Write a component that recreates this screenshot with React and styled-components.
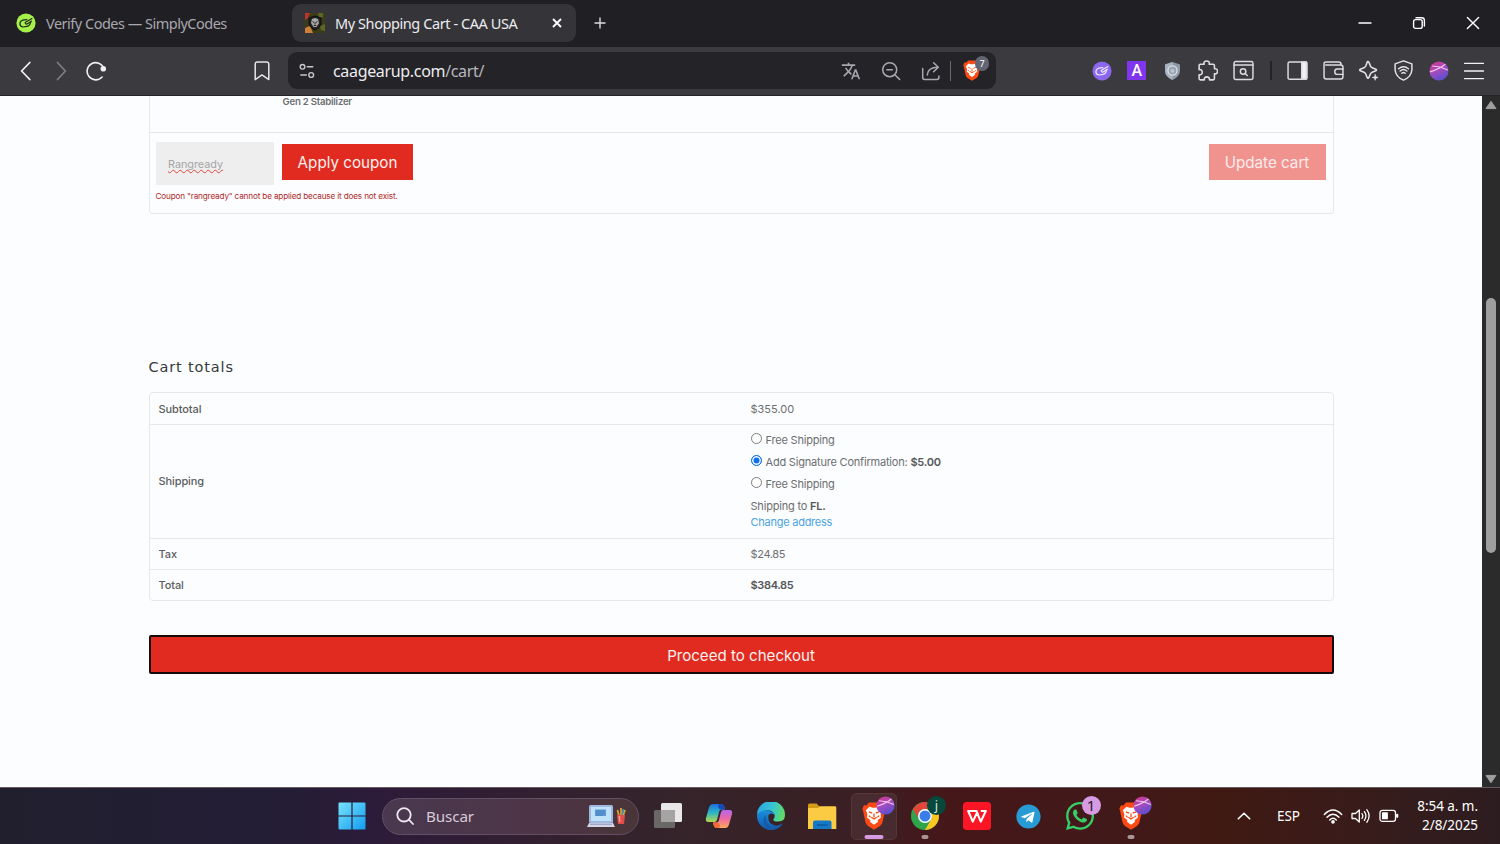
import styled, { createGlobalStyle } from 'styled-components'
import { MdTranslate } from 'react-icons/md'
import { FaWhatsapp, FaTelegram } from 'react-icons/fa'

export default function App() {
    return (
        <Screen>
            <GlobalStyle />
            <Tabs />
            <Toolbar />
            <Viewport>
                <CartPage />
                <Scrollbar>
                    <Arrow viewBox="0 0 12 10"><path d="M6 1.2 L11 8.6 H1 Z" /></Arrow>
                    <Thumb />
                    <Arrow viewBox="0 0 12 10"><path d="M6 8.8 L11 1.4 H1 Z" /></Arrow>
                </Scrollbar>
            </Viewport>
            <Taskbar />
        </Screen>
    )
}

function Tabs() {
    return (
        <TabBar>
            <Tab $width="275px" $pad="16px">
                <svg width="20" height="20" viewBox="0 0 20 20">
                    <circle cx="10" cy="10" r="9.6" fill="#a6f04c" />
                    <Pointer color="#1e2a12" />
                </svg>
                <TabTitle $color="#a9a8ad" $space="-0.5px">Verify Codes — SimplyCodes</TabTitle>
            </Tab>
            <Tab $active $width="284px" $pad="13px">
                <svg width="20" height="20" viewBox="0 0 20 20">
                    <rect width="20" height="20" fill="#3c3d18" />
                    <path d="M0 0H5L3 5L0 7Z" fill="#b8342a" />
                    <path d="M0 15L5 13L8 20H0Z" fill="#cf8038" />
                    <path d="M13 0H18V4L14 5Z M15 13L20 11V18L16 17Z" fill="#5d6724" />
                    <path d="M10 3L16 5V10C16 13 13 15.5 10 17C7 15.5 4 13 4 10V5Z" fill="#222326" stroke="#0d0d0d" />
                    <path d="M7 6L10 5L13 6L14 10L11.5 14H8.5L6 10Z" fill="#a9a7a6" />
                    <path d="M7.5 8.5L9 9.5M12.5 8.5L11 9.5M10 9V11.5M8.8 12.5H11.3" stroke="#29292b" strokeWidth="1" />
                </svg>
                <TabTitle $color="#ececee" $space="-0.42px">My Shopping Cart - CAA USA</TabTitle>
                <TabClose viewBox="0 0 12 12"><path d="M2 2L10 10M10 2L2 10" /></TabClose>
            </Tab>
            <NewTab viewBox="0 0 14 14"><path d="M7 1.5V12.5M1.5 7H12.5" /></NewTab>
            <WindowButtons>
                <Line viewBox="0 0 14 14" $size="14px" $color="#fff"><path d="M1 7H13" /></Line>
                <Line viewBox="0 0 14 14" $size="14px" $color="#fff">
                    <rect x="1.6" y="3.6" width="8.6" height="8.8" rx="2" />
                    <path d="M4 1.7H9.7Q12.4 1.7 12.4 4.4V10" />
                </Line>
                <Line viewBox="0 0 14 14" $size="14px" $color="#fff"><path d="M1.4 1.4L12.6 12.6M12.6 1.4L1.4 12.6" /></Line>
            </WindowButtons>
        </TabBar>
    )
}

// pointing hand used by the SimplyCodes logo
function Pointer({ color }) {
    return (
        <g fill="none" stroke={color} strokeWidth="1.2" strokeLinecap="round" strokeLinejoin="round">
            <path d="M10.8 6.6L6.5 7.2Q3.8 8.2 3.9 11.2Q4.3 13.9 7.5 14L12 13.2Q14.2 12 14.8 9" />
            <path d="M15.9 5.6L9.2 9.6Q9.2 11.4 11.2 11L15.4 8.2" />
        </g>
    )
}

function Toolbar() {
    return (
        <ToolRow>
            <Slot $width="35px">
                <Line viewBox="0 0 20 20" $size="20px" $color="#f0f0f2" $stroke={1.8}><path d="M13.8 1.5L5.6 10L13.8 18.5" /></Line>
            </Slot>
            <Slot $width="35px">
                <Line viewBox="0 0 20 20" $size="20px" $color="#7d7c82" $stroke={1.8}><path d="M6.5 1.5L14.4 10L6.5 18.5" /></Line>
            </Slot>
            <Slot $width="35px">
                <Line viewBox="0 0 20 20" $size="20px" $color="#f0f0f2" $stroke={1.6}>
                    <path d="M16.1 16A8.6 8.6 0 1 1 17.8 7.3" />
                    <circle cx="17.3" cy="7.7" r="2" fill="#f0f0f2" />
                </Line>
            </Slot>
            <Bookmark viewBox="0 0 16 20"><path d="M1.2 3.2Q1.2 1 3.4 1H12.6Q14.8 1 14.8 3.2V18.6L8 13.9L1.2 18.6Z" /></Bookmark>
            <UrlBar>
                <Line viewBox="0 0 16 16" $size="16px" $color="#c7c6cb" $stroke={1.4}>
                    <circle cx="3.5" cy="3.8" r="2.3" />
                    <path d="M8.2 3.8H13.8M1.8 12H7.4" />
                    <circle cx="12.2" cy="12" r="2.4" />
                </Line>
                <Address>caagearup.com<span>/cart/</span></Address>
                <UrlIcons>
                    <Slot $width="40px"><MdTranslate size={20} color="#a9a8ae" /></Slot>
                    <Slot $width="40px">
                        <Line viewBox="0 0 20 20" $size="20px" $color="#a9a8ae" $stroke={1.5}>
                            <circle cx="8.7" cy="8.7" r="7" /><path d="M13.8 13.8L18.6 18.4M5.8 8.7H11.4" />
                        </Line>
                    </Slot>
                    <Slot $width="39px">
                        <Line viewBox="0 0 20 20" $size="20px" $color="#a9a8ae" $stroke={1.5}>
                            <path d="M1.7 7.5V16.5Q1.7 18.4 3.6 18.4H16Q17.9 18.4 17.9 16.5V15" />
                            <path d="M6.3 14Q6.6 6.5 17 6.3M12.6 1.8L17.3 6.3L12.6 10.7" />
                        </Line>
                    </Slot>
                    <UrlDivider />
                    <ShieldButton>
                        <BraveLogo height={21} />
                        <Count>7</Count>
                    </ShieldButton>
                </UrlIcons>
            </UrlBar>
            <Extensions>
                <Slot $width="35.4px">
                    <svg width="20" height="20" viewBox="0 0 20 20">
                        <circle cx="10" cy="10" r="9.6" fill="#8b67ee" /><Pointer color="#eee8ff" />
                    </svg>
                </Slot>
                <Slot $width="35.4px"><LetterTile>A</LetterTile></Slot>
                <Slot $width="35.4px">
                    <svg width="17" height="20" viewBox="0 0 17 20">
                        <path d="M8.5 1L16 3.5V10Q15.5 16 8.5 19Q1.5 16 1 10V3.5Z" fill="#8f98a6" />
                        <path d="M8.5 1V19Q1.5 16 1 10V3.5Z" fill="#a8b1bf" />
                        <circle cx="8.5" cy="9.5" r="4.6" fill="#98a2b2" stroke="#dde2ea" strokeWidth="1.3" />
                        <path d="M6.7 8.3H10.3V11L8.5 12L6.7 11Z" fill="#bdc5d0" />
                    </svg>
                </Slot>
                <Slot $width="35.4px">
                    <Line viewBox="0 0 20 20" $size="21px" $color="#dddce1" $stroke={1.5}>
                        <path d="M3.2 4H6.8C6.2 1.9 7.4 .9 9.2 .9S12.2 1.9 11.6 4H15.4Q16.6 4 16.6 5.2V8.4C18.6 7.9 19.5 9.2 19.5 10.8S18.6 13.6 16.6 13.1V17.6Q16.6 18.9 15.4 18.9H11.8C12.2 17 11 16.1 9.4 16.1S6.6 17 7 18.9H3.2Q2 18.9 2 17.6V14.1C4 14.5 5 13.2 5 11.6S4 8.8 2 9.2V5.2Q2 4 3.2 4Z" />
                    </Line>
                </Slot>
                <Slot $width="35.4px">
                    <Line viewBox="0 0 20 20" $size="21px" $color="#dddce1" $stroke={1.4}>
                        <rect x="1" y="1.5" width="18" height="17" rx="1.6" /><path d="M1 4.8H19" />
                        <circle cx="9.6" cy="10.9" r="2.6" /><path d="M11.6 12.9L13.6 14.8" />
                    </Line>
                </Slot>
                <Slot $width="19.6px"><ExtDivider /></Slot>
                <Slot $width="35.2px">
                    <Line viewBox="0 0 20 20" $size="21px" $color="#dddce1" $stroke={1.4}>
                        <rect x="1" y="1.8" width="18" height="16.6" rx="1.6" /><path d="M14 2H18.6V18H14Z" fill="#f2f2f5" />
                    </Line>
                </Slot>
                <Slot $width="35.2px">
                    <Line viewBox="0 0 20 20" $size="21px" $color="#dddce1" $stroke={1.4}>
                        <path d="M17.2 5V4Q17.2 1.8 15 1.8H3Q1 1.8 1 3.6V16Q1 18 3 18H17Q19 18 19 16V7Q19 4.8 17 4.8H2.6" />
                        <path d="M19 8.6H13.5Q11.2 8.6 11.2 11.1Q11.2 13.7 13.5 13.7H19" />
                    </Line>
                </Slot>
                <Slot $width="35.2px">
                    <Line viewBox="0 0 20 20" $size="21px" $color="#e4e3e8" $stroke={1.5}>
                        <path d="M8.9 1.6Q9.7 1 10.4 2.2L11.8 5.7Q12.3 6.9 13.5 7.4L17 8.8Q18.2 9.5 17 10.3L13.5 11.6Q12.3 12.1 11.8 13.3L10.4 16.7Q9.5 18 8.7 16.7L7.4 13.3Q6.9 12.1 5.7 11.6L2.2 10.3Q1 9.5 2.2 8.8L5.7 7.4Q6.9 6.9 7.4 5.7Z" />
                        <path d="M16.4 13.8L17.1 15.9L19.2 16.6L17.1 17.3L16.4 19.4L15.7 17.3L13.6 16.6L15.7 15.9Z" fill="#e4e3e8" strokeWidth=".6" />
                    </Line>
                </Slot>
                <Slot $width="35.2px">
                    <Line viewBox="0 0 20 20" $size="21px" $color="#e4e3e8" $stroke={1.4}>
                        <path d="M10 .8L18 3.7V9.3Q17.5 16.1 10 19.2Q2.5 16.1 2 9.3V3.7Z" />
                        <path d="M5.3 8.3Q10 4.4 14.7 8.3M6.8 10.5Q10 7.8 13.2 10.5M8.4 12.6Q10 11.4 11.6 12.6" />
                    </Line>
                </Slot>
                <Slot $width="35.2px"><Profile size={20} /></Slot>
                <Slot $width="35.2px">
                    <Line viewBox="0 0 20 20" $size="20px" $color="#f2f2f5" $stroke={1.3}><path d="M.5 2.4H19.5M.5 10H19.5M.5 17.6H19.5" /></Line>
                </Slot>
            </Extensions>
        </ToolRow>
    )
}

function BraveLogo({ height }) {
    return (
        <svg width={height * 24 / 28} height={height} viewBox="0 0 24 28">
            <path d="M7 .6H17L19.5 3.4L22 3.2L23.6 6.5L22.9 9L20.5 20.3Q20 22.5 18 24L12 27.8L6 24Q4 22.5 3.5 20.3L1.1 9L.4 6.5L2 3.2L4.5 3.4Z" fill="#fb4a14" />
            <path d="M3.8 8.3L7.5 4.8L10.5 5.8H13.5L16.5 4.8L20.2 8.3L18.6 12L19 15.5L15.8 18V20L12 22.7L8.2 20V18L5 15.5L5.4 12Z" fill="#fff" />
            <path d="M7 9.8L10.2 11.2M17 9.8L13.8 11.2M12 11.5V15.2M9.3 15.2L12 17L14.7 15.2M6.8 13.6L8.6 15.4M17.2 13.6L15.4 15.4" fill="none" stroke="#fb4a14" strokeWidth="1.3" />
        </svg>
    )
}

function Profile({ size }) {
    return (
        <svg width={size} height={size} viewBox="0 0 20 20">
            <defs>
                <linearGradient id="profile" x1=".2" y1="0" x2=".7" y2="1">
                    <stop offset="0" stopColor="#d0388f" /><stop offset=".5" stopColor="#a04bc0" /><stop offset="1" stopColor="#554fd0" />
                </linearGradient>
            </defs>
            <circle cx="10" cy="10" r="9.6" fill="url(#profile)" />
            <path d="M3.2 5Q11 5.2 18.8 9M1 10.8Q10 8.2 16.2 3.2" fill="none" stroke="#f0c4ec" strokeWidth="1.2" />
        </svg>
    )
}

function CartPage() {
    return (
        <Page>
            <CartBox>
                <Product>Gen 2 Stabilizer</Product>
                <Actions>
                    <Coupon><span>Rangready</span></Coupon>
                    <Button $width="131px">Apply coupon</Button>
                    <Button $width="117px" $disabled>Update cart</Button>
                </Actions>
                <CouponError>Coupon "rangready" cannot be applied because it does not exist.</CouponError>
            </CartBox>
            <Title>Cart totals</Title>
            <Totals>
                <Row $height="31px">
                    <Th>Subtotal</Th>
                    <Td>$355.00</Td>
                </Row>
                <Row $height="113.5px">
                    <Th>Shipping</Th>
                    <Td $raised>
                        <Option><Radio />Free Shipping</Option>
                        <Option><Radio $checked />Add Signature Confirmation:&nbsp;<b>$5.00</b></Option>
                        <Option><Radio />Free Shipping</Option>
                        <Destination>Shipping to <b>FL.</b></Destination>
                        <ChangeLink>Change address</ChangeLink>
                    </Td>
                </Row>
                <Row $height="31px">
                    <Th>Tax</Th>
                    <Td $tight>$24.85</Td>
                </Row>
                <Row $height="31px">
                    <Th>Total</Th>
                    <Td $tight><b>$384.85</b></Td>
                </Row>
            </Totals>
            <Checkout>Proceed to checkout</Checkout>
        </Page>
    )
}

function Taskbar() {
    return (
        <Bar>
            <svg width="28" height="28" viewBox="0 0 28 28">
                <defs>
                    <linearGradient id="win" x1="0" y1="0" x2="1" y2="1">
                        <stop offset="0" stopColor="#78e3fb" /><stop offset="1" stopColor="#119cf0" />
                    </linearGradient>
                </defs>
                <path d="M1.5 .5H13.4V13.4H.5V1.5Q.5 .5 1.5 .5ZM14.6 .5H26.5Q27.5 .5 27.5 1.5V13.4H14.6ZM.5 14.6H13.4V27.5H1.5Q.5 27.5 .5 26.5ZM14.6 14.6H27.5V26.5Q27.5 27.5 26.5 27.5H14.6Z" fill="url(#win)" />
            </svg>
            <Search>
                <Line viewBox="0 0 18 18" $size="18px" $color="#eee6f0" $stroke={1.8}><circle cx="8" cy="7.8" r="6.7" /><path d="M12.9 12.7L17 17" /></Line>
                <span>Buscar</span>
                <svg width="40" height="24" viewBox="0 0 40 24">
                    <rect x="3" y="1" width="24" height="18" rx="1.5" fill="#9fb8e0" />
                    <rect x="5" y="3" width="20" height="14" fill="#bfe2fa" />
                    <path d="M9 5.5H20V12H9Z" fill="#5e9bd6" />
                    <path d="M10 7H19M10 9H19M10 11H17" stroke="#3675ba" strokeWidth=".7" />
                    <path d="M3 19H27L29 23H1Z" fill="#d3d6e6" />
                    <path d="M4 20.2H26" stroke="#8e93b4" />
                    <path d="M33 12L31.5 6M35 12V4M37 12L39 6" stroke="#dda22e" strokeWidth="1.8" />
                    <path d="M36 11L37.5 5" stroke="#4693c9" strokeWidth="1.5" />
                    <path d="M31 11H39L38 20H32Z" fill="#e34d4b" /><path d="M32.5 12H34.2L34.4 18H33Z" fill="#ff9a90" />
                </svg>
            </Search>
            <Apps>
                <AppSlot>
                    <svg width="30" height="28" viewBox="0 0 30 28">
                        <rect x="8" y="1" width="21" height="19" rx="1.5" fill="#e9e8e8" />
                        <rect x="1" y="8" width="21" height="18" rx="1.5" fill="#6a6767" />
                        <path d="M8 8H22V20H8Z" fill="#a5a3a3" />
                    </svg>
                </AppSlot>
                <AppSlot><Copilot /></AppSlot>
                <AppSlot><Edge /></AppSlot>
                <AppSlot>
                    <svg width="30" height="28" viewBox="0 0 30 28">
                        <path d="M1 3Q1 1.5 2.5 1.5H9.5L12.5 4.5V10H1Z" fill="#d39a17" />
                        <path d="M1 6H11L13 4.2H28Q29.3 4.2 29.3 5.5V27H1Z" fill="#fccb44" />
                        <path d="M6 27V20.5Q6 18.5 8 18.5H22.5Q24.5 18.5 24.5 20.5V27Z" fill="#1679c8" />
                        <path d="M10 23H20.5" stroke="#09518f" strokeWidth="1.2" />
                    </svg>
                </AppSlot>
                <AppSlot $active>
                    <BraveLogo height={28} />
                    <ProfileBadge><Profile size={19} /></ProfileBadge>
                    <Running $active />
                </AppSlot>
                <AppSlot>
                    <svg width="28" height="28" viewBox="0 0 28 28">
                        <circle cx="14" cy="14" r="14" fill="#2ea44c" />
                        <path d="M1.9 7A14 14 0 0 1 26.1 7H14A7 7 0 0 0 7.9 17.5Z" fill="#e2453a" />
                        <path d="M26.1 7A14 14 0 0 1 14 28L20.1 17.5A7 7 0 0 0 14 7Z" fill="#fbc71f" />
                        <circle cx="14" cy="14" r="7" fill="#fff" /><circle cx="14" cy="14" r="5.5" fill="#3b7de8" />
                    </svg>
                    <Badge $bg="#07473c" $color="#d5e5df" $font="13px">j</Badge>
                    <Running />
                </AppSlot>
                <AppSlot>
                    <svg width="28" height="28" viewBox="0 0 28 28">
                        <rect width="28" height="28" rx="3.5" fill="#fb1525" />
                        <path d="M10.5 9H5.2L9.8 19.6L14 10.6L17.8 19.6L22.8 9H17.8" fill="none" stroke="#fff" strokeWidth="2.1" strokeLinejoin="round" />
                        <path d="M9 9H13.6L15 12.5" fill="none" stroke="#fff" strokeWidth="1.8" />
                    </svg>
                </AppSlot>
                <AppSlot>
                    <TelegramMark><FaTelegram size={25} /></TelegramMark>
                </AppSlot>
                <AppSlot>
                    <FaWhatsapp size={32} color="#35cf67" />
                    <Badge $bg="#d79be3" $color="#251a28" $font="15px">1</Badge>
                </AppSlot>
                <AppSlot>
                    <BraveLogo height={28} />
                    <ProfileBadge><Profile size={19} /></ProfileBadge>
                    <Running />
                </AppSlot>
            </Apps>
            <Tray>
                <Line viewBox="0 0 14 10" $size="14px" $color="#fff" $stroke={1.6}><path d="M1.3 7.8L7 2.2L12.7 7.8" /></Line>
                <Lang>ESP</Lang>
                <TrayIcons>
                    <Line viewBox="0 0 20 16" $size="20px" $color="#fff" $stroke={1.4}>
                        <path d="M1.3 6.5Q10 -2.4 18.7 6.5M4 9.3Q10 3.2 16 9.3M6.7 12Q10 8.6 13.3 12" />
                        <circle cx="10" cy="13.9" r="1.1" fill="#fff" />
                    </Line>
                    <Line viewBox="0 0 20 16" $size="20px" $color="#fff" $stroke={1.3}>
                        <path d="M1 5.5H4.5L8.3 2V14L4.5 10.5H1Z M11 5.6Q12.6 8 11 10.4M13.4 3.6Q16.4 8 13.4 12.4M15.8 1.7Q20.4 8 15.8 14.3" />
                    </Line>
                    <Line viewBox="0 0 20 16" $size="20px" $color="#fff" $stroke={1.3}>
                        <rect x="1" y="2.3" width="15.5" height="11" rx="2.4" />
                        <rect x="3.6" y="5" width="4.6" height="5.7" fill="#fff" />
                        <path d="M18.2 6.8V8.8" strokeWidth="2.2" />
                    </Line>
                </TrayIcons>
                <Clock>
                    <span>8:54 a. m.</span>
                    <span>2/8/2025</span>
                </Clock>
            </Tray>
        </Bar>
    )
}

function Copilot() {
    return (
        <svg width="28" height="28" viewBox="0 0 28 28">
            <defs>
                <linearGradient id="cpLeft" x1="0" y1="0" x2="0" y2="1">
                    <stop offset="0" stopColor="#1c6fe0" /><stop offset=".5" stopColor="#2db7c4" /><stop offset="1" stopColor="#b8d84a" />
                </linearGradient>
                <linearGradient id="cpRight" x1="0" y1="0" x2="0" y2="1">
                    <stop offset="0" stopColor="#b565ea" /><stop offset=".5" stopColor="#ee6aa0" /><stop offset="1" stopColor="#fbab57" />
                </linearGradient>
            </defs>
            <path d="M8 2H16Q18.5 2 19.4 5L20 7.5H16.5Q14.8 7.5 14.2 9.5L12 18Q11.4 20 9.5 20H3.5Q0 20 1 16L4 5.5Q5 2 8 2Z" fill="url(#cpLeft)" />
            <path d="M14 2H16Q18.5 2 19.4 5L20 7.5H16.5Q13.7 7.5 13 4Z" fill="#1648b8" />
            <path d="M20 26H12Q9.5 26 8.6 23L8 20.5H11.5Q13.2 20.5 13.8 18.5L16 10Q16.6 8 18.5 8H24.5Q28 8 27 12L24 22.5Q23 26 20 26Z" fill="url(#cpRight)" />
            <path d="M14 26H12Q9.5 26 8.6 23L8 20.5H11.5Q14.3 20.5 15 24Z" fill="#f26a38" />
        </svg>
    )
}

function Edge() {
    return (
        <svg width="28" height="28" viewBox="0 0 28 28">
            <defs>
                <linearGradient id="edgeTop" x1="0" y1=".3" x2="1" y2=".5">
                    <stop offset="0" stopColor="#2aa7e4" /><stop offset=".55" stopColor="#37c6d1" /><stop offset="1" stopColor="#62dc62" />
                </linearGradient>
                <linearGradient id="edgeLow" x1="0" y1="0" x2="0" y2="1">
                    <stop offset="0" stopColor="#1a8fdd" /><stop offset="1" stopColor="#1158ac" />
                </linearGradient>
            </defs>
            <path d="M0 13A14 14 0 0 1 28 13Q28 19.4 21.5 19.6Q16.4 19.7 16.2 17.4Q17.8 16 17.7 13.6Q17.2 10 12.6 8.6Q4.5 7.5 0 13Z" fill="url(#edgeTop)" />
            <path d="M0 13Q4 7.6 11 8.6Q16.2 9.6 17.6 13Q13.5 9.9 11.6 13Q9.8 21.2 18 23.6Q22.5 24 25.8 21.5A14 14 0 0 1 0 13Z" fill="url(#edgeLow)" />
            <path d="M9 12.5Q7.6 20.5 13.8 24.1Q20 26 25.8 21.5Q21.5 28 14 28Q7 26.7 6.5 20Q6.4 15.3 9 12.5Z" fill="#155da8" />
        </svg>
    )
}

const GlobalStyle = createGlobalStyle`
    * { box-sizing: border-box; }
    body { margin: 0; overflow: hidden; }
    svg { flex-shrink: 0; display: block; }
`

const Screen = styled.div`
    width: 1500px;
    height: 844px;
    display: flex;
    flex-direction: column;
    overflow: hidden;
    font-family: "Noto Sans", "Open Sans", sans-serif;
`
const Line = styled.svg`
    width: ${props => props.$size};
    height: ${props => props.$size};
    fill: none;
    stroke: ${props => props.$color};
    stroke-width: ${props => props.$stroke || 1.4};
    stroke-linecap: round;
    stroke-linejoin: round;
`
const TabBar = styled.div`
    height: 47px;
    padding-bottom: 1px;
    background: #201f24;
    display: flex;
    align-items: center;
    flex-shrink: 0;
`
const Tab = styled.div`
    width: ${props => props.$width};
    height: 38px;
    padding: 0 13px 0 ${props => props.$pad};
    margin-right: 17px;
    border-radius: 9px;
    background: ${props => props.$active ? '#353439' : 'transparent'};
    display: flex;
    align-items: center;
    gap: 10px;
`
const TabTitle = styled.div`
    font-size: 14.5px;
    white-space: nowrap;
    color: ${props => props.$color};
    letter-spacing: ${props => props.$space};
`
const TabClose = styled.svg`
    width: 12px;
    height: 12px;
    margin-left: auto;
    stroke: #fff;
    stroke-width: 1.8;
`
const NewTab = styled.svg`
    width: 14px;
    height: 14px;
    stroke: #dcdce0;
    stroke-width: 1.4;
`
const WindowButtons = styled.div`
    margin-left: auto;
    margin-right: 20px;
    display: flex;
    gap: 40px;
`
const ToolRow = styled.div`
    height: 49px;
    padding: 0 0 1px 8px;
    background: #3b3a3f;
    border-bottom: 1px solid #252429;
    display: flex;
    align-items: center;
    flex-shrink: 0;
`
const Slot = styled.div`
    width: ${props => props.$width};
    display: flex;
    justify-content: center;
    align-items: center;
    flex-shrink: 0;
`
const Bookmark = styled.svg`
    width: 16px;
    height: 20px;
    margin: 0 18px 0 141px;
    fill: none;
    stroke: #e6e5ea;
    stroke-width: 1.5;
    stroke-linejoin: round;
`
const UrlBar = styled.div`
    width: 708px;
    height: 37px;
    padding-left: 11px;
    border-radius: 9px;
    background: #242328;
    display: flex;
    align-items: center;
`
const Address = styled.div`
    margin-left: 18px;
    font-size: 16px;
    letter-spacing: -0.33px;
    color: #ededf0;
    white-space: nowrap;
    span { color: #b7b6bc; }
`
const UrlIcons = styled.div`
    margin-left: auto;
    display: flex;
    align-items: center;
    padding-right: 5px;
`
const UrlDivider = styled.div`
    width: 1px;
    height: 20px;
    background: #68676d;
`
const ShieldButton = styled.div`
    width: 40px;
    height: 30px;
    padding-left: 12px;
    position: relative;
    display: flex;
    align-items: center;
`
const Count = styled.div`
    position: absolute;
    right: 2px;
    top: 0;
    width: 14px;
    height: 15px;
    border-radius: 7px;
    background: #636574;
    color: #fff;
    font-size: 9px;
    line-height: 15px;
    text-align: center;
`
const Extensions = styled.div`
    display: flex;
    align-items: center;
    margin-left: auto;
    margin-right: 8.5px;
`
const LetterTile = styled.div`
    width: 19px;
    height: 19px;
    background: #8035ee;
    color: #fff;
    font: 500 16px/19px "Roboto", sans-serif;
    text-align: center;
`
const ExtDivider = styled.div`
    width: 2px;
    height: 19px;
    background: #242328;
`
const Viewport = styled.div`
    flex: 1;
    min-height: 0;
    display: flex;
    background: #fcfdff;
`
const Page = styled.div`
    flex: 1;
    padding: 0 148.5px;
    font-family: "Inter", sans-serif;
    font-size: 11px;
    color: #6c6e70;
    b { font-weight: 600; color: #55575a; }
`
const Scrollbar = styled.div`
    width: 18px;
    background: #2b2b2c;
    display: flex;
    flex-direction: column;
    align-items: center;
    justify-content: space-between;
    padding: 4px 0 3px;
`
const Arrow = styled.svg`
    width: 12px;
    height: 10px;
    fill: #9f9f9f;
    stroke: #9f9f9f;
    stroke-linejoin: round;
`
const Thumb = styled.div`
    width: 10px;
    height: 255px;
    margin-top: -34px;
    border-radius: 5px;
    background: #9f9f9f;
`
const CartBox = styled.div`
    height: 118px;
    border: 1px solid #e7e8ea;
    border-top: none;
    border-radius: 0 0 4px 4px;
`
const Product = styled.div`
    height: 37px;
    padding-left: 133px;
    border-bottom: 1px solid #e7e8ea;
    font-size: 9.6px;
    font-weight: 600;
    line-height: 11px;
    letter-spacing: -0.22px;
`
const Actions = styled.div`
    display: flex;
    padding: 9px 7px 0 6px;
    height: 52px;
`
const Coupon = styled.div`
    width: 118px;
    height: 43px;
    margin-right: 8.5px;
    padding: 16px 0 0 12.5px;
    background: #efeeee;
    color: #a5a5a6;
    font-size: 10.8px;
    line-height: 13px;
    span {
        text-decoration: underline wavy #e0453d 1px;
        text-underline-offset: 1px;
        text-decoration-skip-ink: none;
    }
`
const Button = styled.div`
    width: ${props => props.$width};
    height: 36px;
    margin-top: 2px;
    margin-left: ${props => props.$disabled ? 'auto' : '0'};
    background: ${props => props.$disabled ? '#f0938f' : '#e12a20'};
    color: ${props => props.$disabled ? '#fdeceb' : '#fdf1ef'};
    font-size: 15.2px;
    line-height: 38px;
    text-align: center;
    white-space: nowrap;
`
const CouponError = styled.div`
    padding-left: 6px;
    margin-top: 6px;
    font-size: 8.2px;
    line-height: 11px;
    letter-spacing: -0.17px;
    color: #b02a2a;
    white-space: nowrap;
`
const Title = styled.div`
    margin-top: 142px;
    height: 36px;
    line-height: 22px;
    font-family: "DejaVu Sans", sans-serif;
    font-size: 14.5px;
    letter-spacing: 0.85px;
    color: #38393b;
`
const Totals = styled.div`
    border: 1px solid #e7e8ea;
    border-radius: 4px;
`
const Row = styled.div`
    height: ${props => props.$height};
    display: flex;
    align-items: center;
    & + & { border-top: 1px solid #e7e8ea; }
`
const Th = styled.div`
    width: 601px;
    padding-left: 9px;
    font-weight: 500;
    color: #5b5d60;
    letter-spacing: -0.1px;
`
const Td = styled.div`
    line-height: 16px;
    padding-bottom: ${props => props.$raised ? '3px' : '0'};
    letter-spacing: ${props => props.$tight ? '-0.35px' : '0'};
`
const Option = styled.div`
    display: flex;
    align-items: center;
    height: 22px;
    letter-spacing: -0.2px;
`
const Radio = styled.div`
    width: 11px;
    height: 11px;
    margin: -3px 4px 0 0;
    border-radius: 50%;
    border: 1px solid ${props => props.$checked ? '#1272e8' : '#7b7c7e'};
    background: ${props => props.$checked ? '#0b6ff0' : '#fff'};
    box-shadow: inset 0 0 0 1.5px #fff;
`
const Destination = styled.div`
    margin-top: 3px;
    letter-spacing: -0.2px;
`
const ChangeLink = styled.div`
    color: #4ba3e0;
    letter-spacing: -0.25px;
`
const Checkout = styled.div`
    height: 39px;
    margin-top: 34px;
    border: 2px solid #16090a;
    border-radius: 2px;
    background: #e12a20;
    color: #fdf1ef;
    font-size: 15.1px;
    line-height: 37px;
    text-align: center;
`
const Bar = styled.div`
    height: 57px;
    padding-left: 338px;
    border-top: 1px solid #655c62;
    background: linear-gradient(90deg, #211f2e 0, #231d35 270px, #2d1b3a 380px, #33202f 560px, #35242a 680px, #3a1f24 850px, #461719 950px, #42191a 1100px, #401913 1220px, #371c1b 1380px, #2c1c20 1500px);
    display: flex;
    align-items: center;
    flex-shrink: 0;
`
const Search = styled.div`
    width: 257px;
    height: 37px;
    margin-left: 16px;
    padding: 0 12px 0 13px;
    border: 1px solid #625066;
    border-radius: 19px;
    background: linear-gradient(90deg, #49384f, #4d3547 60%, #493538);
    display: flex;
    align-items: center;
    color: #d6cad8;
    font-size: 15.2px;
    letter-spacing: -0.1px;
    span { margin: 0 auto 0 12px; }
`
const Apps = styled.div`
    display: flex;
    margin-left: 3px;
`
const AppSlot = styled.div`
    width: 45.5px;
    height: 47px;
    margin: 0 3px;
    border-radius: 5px;
    border: 1px solid ${props => props.$active ? '#573538' : 'transparent'};
    background: ${props => props.$active ? '#482b2e' : 'transparent'};
    position: relative;
    display: flex;
    align-items: center;
    justify-content: center;
`
const ProfileBadge = styled.div`
    position: absolute;
    right: 1px;
    top: 2px;
`
const Badge = styled.div`
    position: absolute;
    right: 1px;
    top: 2px;
    width: 19px;
    height: 19px;
    border-radius: 50%;
    background: ${props => props.$bg};
    color: ${props => props.$color};
    font-size: ${props => props.$font};
    line-height: 18px;
    text-align: center;
`
const Running = styled.div`
    position: absolute;
    left: 50%;
    bottom: 0;
    width: ${props => props.$active ? '19px' : '7px'};
    height: 4px;
    transform: translateX(-50%);
    border-radius: 2px;
    background: ${props => props.$active ? '#d79be3' : '#a99697'};
`
const TelegramMark = styled.div`
    border-radius: 50%;
    background: radial-gradient(#fff 60%, transparent 61%);
    color: #289bd5;
`
const Tray = styled.div`
    margin-left: auto;
    padding-right: 22px;
    display: flex;
    align-items: center;
    color: #fff;
    font-size: 13.5px;
`
const Lang = styled.div`
    margin-left: 26px;
    font-size: 13.5px;
`
const TrayIcons = styled.div`
    display: flex;
    gap: 8px;
    margin-left: 23px;
`
const Clock = styled.div`
    width: 70px;
    margin-left: 9px;
    display: flex;
    flex-direction: column;
    align-items: flex-end;
    line-height: 19px;
    letter-spacing: -0.05px;
    white-space: nowrap;
`
